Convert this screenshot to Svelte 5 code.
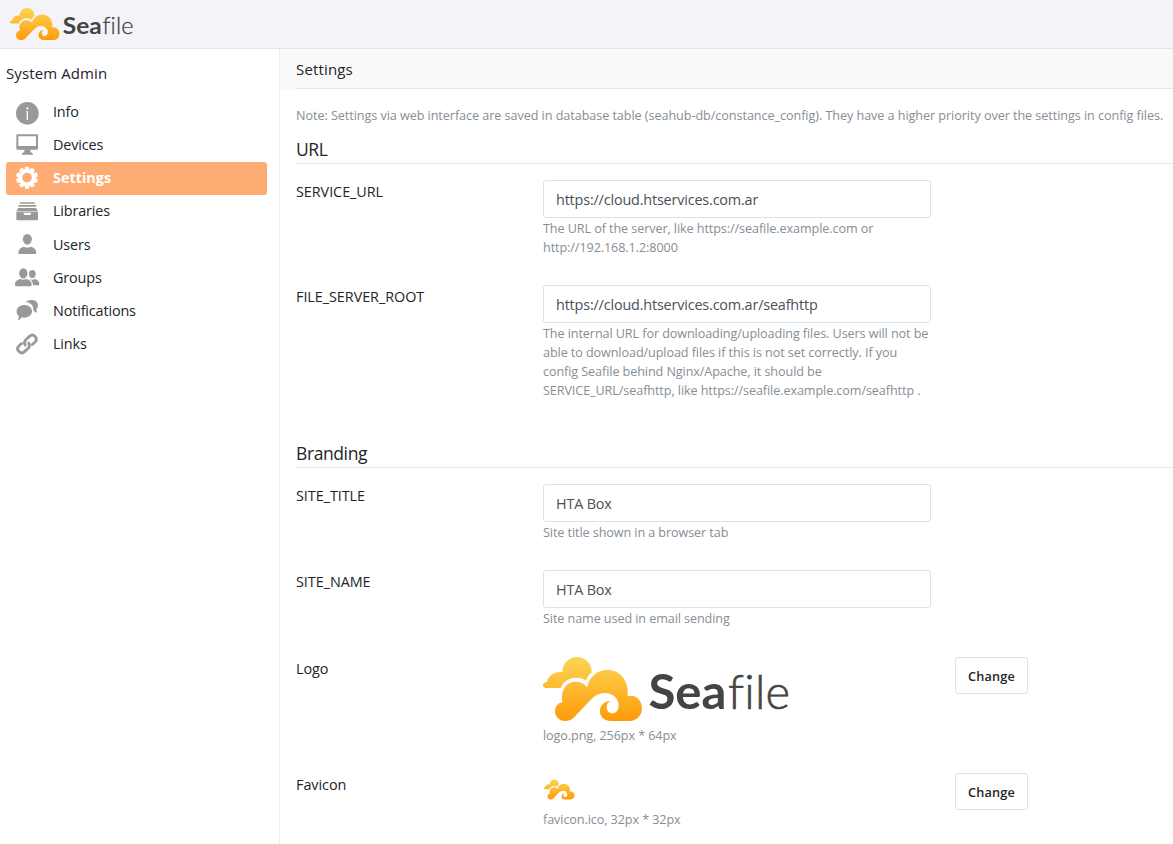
<script>
  const nav = [
    { id: 'info', label: 'Info' },
    { id: 'devices', label: 'Devices' },
    { id: 'settings', label: 'Settings', active: true },
    { id: 'libraries', label: 'Libraries' },
    { id: 'users', label: 'Users' },
    { id: 'groups', label: 'Groups' },
    { id: 'notifications', label: 'Notifications' },
    { id: 'links', label: 'Links' }
  ];
  const urls = [
    { key: 'SERVICE_URL', value: 'https://cloud.htservices.com.ar', help: ['The URL of the server, like https://seafile.example.com or', 'http://192.168.1.2:8000'] },
    { key: 'FILE_SERVER_ROOT', value: 'https://cloud.htservices.com.ar/seafhttp', help: ['The internal URL for downloading/uploading files. Users will not be', 'able to download/upload files if this is not set correctly. If you', 'config Seafile behind Nginx/Apache, it should be', 'SERVICE_URL/seafhttp, like https://seafile.example.com/seafhttp .'] }
  ];
  const branding = [
    { key: 'SITE_TITLE', value: 'HTA Box', help: ['Site title shown in a browser tab'] },
    { key: 'SITE_NAME', value: 'HTA Box', help: ['Site name used in email sending'] }
  ];
  const teeth = Array.from({ length: 10 }, (_, i) => i * 36);
</script>

{#snippet clouds(gid)}
  <defs>
    <linearGradient id={gid} gradientUnits="userSpaceOnUse" x1="0" y1="36" x2="0" y2="228">
      <stop offset="0" stop-color="#fcd455" />
      <stop offset=".5" stop-color="#fdb930" />
      <stop offset="1" stop-color="#ff9a0a" />
    </linearGradient>
  </defs>
  <g fill="url(#{gid})">
    <path d="M33 129C20 129 21 112 36 111C40 91 58 79 82 81C82 56 102 36 126 36C152 36 171 57 170 82C163 88 157 96 153 106C144 100 134 98 125 98C103 98 85 110 77 129Z" />
    <path d="M90 228C73 228 60 215 60 199C60 184 70 173 83 171C75 139 92 110 122 110C136 110 149 116 157 127C161 97 186 75 217 75C255 75 282 105 278 154C300 147 321 164 321 190C321 211 305 228 284 228H227C209 228 195 216 195 199C195 181 208 167 228 168C219 171 215 179 215 187C215 197 222 205 232 205C243 205 251 195 251 182C251 160 233 144 209 144C192 144 178 153 166 166L118 216C111 224 102 228 90 228Z" />
  </g>
{/snippet}

{#snippet logo(gid, w)}
  <svg class="logo" width={w} height={w / 4} viewBox="0 0 256 64" role="img" aria-label="Seafile">
    <g transform="translate(-8 -12) scale(.33333)">{@render clouds(gid)}</g>
    <text x="105.5" y="52" class="word bold" textLength="78" lengthAdjust="spacingAndGlyphs">Sea</text>
    <text x="185" y="52" class="word light" textLength="62" lengthAdjust="spacing">file</text>
  </svg>
{/snippet}

{#snippet icon(id)}
  <svg class="icon" width="24" height="24" viewBox="0 0 72 72" fill="currentColor" aria-hidden="true">
    {#if id === 'info'}
      <circle cx="37" cy="37" r="34" />
      <circle cx="37" cy="22" r="3.4" fill="#fff" />
      <path d="M33 31h6v26h-4V34h-2z" fill="#fff" />
    {:else if id === 'devices'}
      <path fill-rule="evenodd" d="M7 1h59q3 0 3 3v40q0 3-3 3H7q-3 0-3-3V4q0-3 3-3zM10 7v29h53V7z" />
      <path d="M28 46h18v8q8 2 8 8H20q0-6 8-8z" />
    {:else if id === 'settings'}
      <circle cx="36" cy="32" r="20.5" fill="none" stroke="currentColor" stroke-width="12" />
      {#each teeth as a}
        <rect x="29.5" y="-1" width="13" height="14" rx="3" transform="rotate({a} 36 32)" />
      {/each}
    {:else if id === 'libraries'}
      <path d="M16 7h42l3 4H13zM12 15h50l3 5H9zM10 24h53l6 10H4z" />
      <path d="M4 35h65v23q0 3-3 3H7q-3 0-3-3z" />
      <path d="M26 38h22v3q0 4-4 4H30q-4 0-4-4z" fill="#fff" />
    {:else if id === 'users'}
      <ellipse cx="37" cy="19" rx="13.5" ry="16" />
      <path d="M10 60c0-10 4-15 17-19q10 5 20 0c13 4 17 9 17 19q0 3-4 3H14q-4 0-4-3z" />
    {:else if id === 'groups'}
      <ellipse cx="25" cy="22" rx="12.5" ry="15.5" />
      <path d="M0 56c0-9 4-13 16-17q9 5 18 0c12 4 16 8 16 17q0 5-4 5H4q-4 0-4-5z" />
      <ellipse cx="52" cy="24" rx="10" ry="12" />
      <path d="M54 58h16q3 0 3-5c-1-7-5-11-13-14q-8 4-15 1q8 5 9 18z" />
    {:else if id === 'notifications'}
      <path d="M28 18c13 0 23 8 23 19S41 56 28 56c-3 0-6 0-8-1-3 5-7 8-12 9 3-4 4-8 3-13-4-4-6-8-6-14 0-11 10-19 23-19z" />
      <path d="M32 9c5-5 13-7 21-6 10 1 16 8 16 16 0 5-2 9-5 12 0 4 1 7 3 10-5-1-9-3-12-6 2-13-7-25-23-26z" />
    {:else}
      <g fill="none" stroke="currentColor" stroke-width="8.5" transform="rotate(-42 36 36)" stroke-linecap="round">
        <path d="M25 24H15q-12 0-12 12t12 12h14q11 0 13-11" />
        <path d="M47 48h10q12 0 12-12T57 24H43q-11 0-13 11" />
      </g>
    {/if}
  </svg>
{/snippet}

{#snippet field(f)}
  <div class="row">
    <span class="key">{f.key}</span>
    <div>
      <input type="text" value={f.value} aria-label={f.key} />
      <p class="help">{#each f.help as line}<span>{line}</span>{/each}</p>
    </div>
  </div>
{/snippet}

<div class="page">
  <header class="top">{@render logo('gradTop', 128)}</header>
  <div class="body">
    <aside>
      <h3>System Admin</h3>
      <nav>
        {#each nav as n}
          <a href="#{n.id}" class:active={n.active}>{@render icon(n.id)}<span>{n.label}</span></a>
        {/each}
      </nav>
    </aside>
    <main>
      <div class="bar"><h3>Settings</h3></div>
      <div class="content">
        <p class="note">Note: Settings via web interface are saved in database table (seahub-db/constance_config). They have a higher priority over the settings in config files.</p>
        <h4>URL</h4>
        {#each urls as f}{@render field(f)}{/each}
        <h4 class="second">Branding</h4>
        {#each branding as f}{@render field(f)}{/each}
        <div class="row pic">
          <span class="key">Logo</span>
          <div>
            {@render logo('gradMain', 256)}
            <p class="help"><span>logo.png, 256px * 64px</span></p>
          </div>
          <button>Change</button>
        </div>
        <div class="row fav">
          <span class="key">Favicon</span>
          <div>
            <svg class="logo" width="32" height="32" viewBox="16 76 310 310" aria-hidden="true">
              <g transform="translate(0 104)">{@render clouds('gradFav')}</g>
            </svg>
            <p class="help"><span>favicon.ico, 32px * 32px</span></p>
          </div>
          <button>Change</button>
        </div>
      </div>
    </main>
  </div>
</div>

<style>
  :global(body) { margin: 0; overflow: hidden; }
  .page {
    height: 844px;
    display: flex;
    flex-direction: column;
    overflow: hidden;
    background: #fff;
    color: #212529;
    font-family: "Open Sans", "Noto Sans", sans-serif;
    font-size: 14.4px;
    letter-spacing: -0.15px;
  }
  h3, h4, p { margin: 0; font-weight: 400; }
  .top {
    box-sizing: border-box;
    flex: none;
    height: 49px;
    padding: 8px 10px;
    background: #f4f4f8;
    border-bottom: 1px solid #e4e4e6;
  }
  .logo { display: block; }
  .word { font-family: Lato, sans-serif; font-size: 47px; fill: #444; letter-spacing: 0; font-variant-ligatures: none; }
  .bold { font-weight: 700; }
  .light { font-weight: 300; stroke: #444; stroke-width: 0.6px; }
  .body { flex: 1; display: flex; min-height: 0; }
  aside {
    box-sizing: border-box;
    flex: none;
    width: 280px;
    padding: 13px 12px 0 6px;
    border-right: 1px solid #eee;
  }
  aside h3 { font-size: 15px; line-height: 22px; height: 34px; letter-spacing: 0.1px; }
  nav { display: flex; flex-direction: column; }
  nav a {
    display: flex;
    align-items: center;
    height: 33.14px;
    padding-left: 9px;
    gap: 14px;
    border-radius: 3px;
    color: #212529;
    text-decoration: none;
  }
  nav span { padding-bottom: 2px; }
  .icon { flex: none; color: #999; overflow: visible; }
  nav a.active { background: #feac74; color: #fff; font-weight: 700; letter-spacing: 0; }
  nav a.active .icon { color: #fff; }
  main { flex: 1; min-width: 0; }
  .bar { background: #f9f9f9; padding-left: 16px; }
  .bar h3 { height: 39px; line-height: 41px; border-bottom: 1px solid #e5e5e5; font-size: 15px; letter-spacing: 0.15px; }
  .content { padding-left: 16px; }
  .note { height: 48px; padding-top: 17px; box-sizing: border-box; line-height: 20px; font-size: 12.6px; letter-spacing: -0.05px; color: #868e96; white-space: nowrap; }
  h4 { height: 26px; line-height: 25px; border-bottom: 1px solid #e5e5e5; font-size: 17.5px; letter-spacing: -0.4px; }
  .second { margin-top: 29px; margin-bottom: 0; }
  .row { display: grid; grid-template-columns: 247px 388px auto; padding: 16px 0 13px; justify-content: start; }
  .key { line-height: 22px; padding-top: 1px; letter-spacing: -0.05px; }
  input {
    display: block;
    box-sizing: border-box;
    width: 388px;
    height: 38px;
    padding: 0 12px;
    border: 1px solid #dfe1e5;
    border-radius: 3px;
    background: #fff;
    color: #495057;
    font: inherit;
    letter-spacing: -0.17px;
  }
  .help { display: flex; flex-direction: column; font-size: 12.6px; line-height: 19px; letter-spacing: -0.08px; color: #868e96; padding-top: 1px; margin-bottom: -1px; white-space: nowrap; }
  .pic { padding: 17px 0 0; height: 100px; }
  .pic .help { padding-top: 5px; }
  .fav .help { padding-top: 5px; }
  button {
    align-self: start;
    margin-left: 24px;
    width: 73px;
    height: 37px;
    padding: 1px 0 0;
    background: #fff;
    border: 1px solid #dfe1e5;
    border-radius: 3px;
    color: #212529;
    font: 600 12.7px "Open Sans", sans-serif;
    letter-spacing: 0.15px;
  }
</style>
